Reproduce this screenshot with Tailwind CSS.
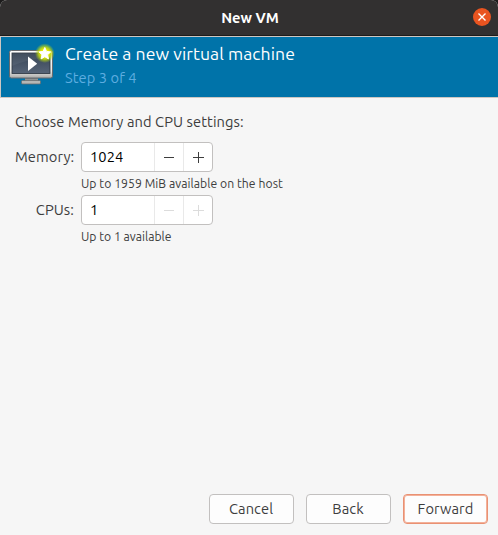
<!DOCTYPE html>
<html lang="en">
<head>
<meta charset="utf-8">
<title>New VM</title>
<script src="https://cdn.jsdelivr.net/npm/@tailwindcss/browser@4"></script>
</head>
<body class="w-[498px] h-[535px] overflow-hidden bg-[#1d1c1c] font-['Ubuntu','Noto_Sans',sans-serif] text-[#3d3d3d]">
<div class="flex h-[535px] flex-col overflow-hidden rounded-t-[7px] bg-[#f6f6f6]">
  <header class="grid h-9 shrink-0 grid-cols-[1fr_auto_1fr] items-center border-b border-[#1d1c1c] bg-[#323030] px-[7px]">
    <h1 class="col-start-2 pl-[2px] text-[14.67px] font-bold leading-[18px] text-white">New VM</h1>
    <button class="justify-self-end" aria-label="Close">
      <svg class="block" width="18" height="19" viewBox="0 0 18 19"><circle cx="9" cy="9" r="9" fill="#e95420"/><path d="M5.5 5.5l7 7M12.5 5.5l-7 7" stroke="#fff" stroke-width="1.4"/></svg>
    </button>
  </header>
  <section class="flex h-[62px] shrink-0 border-y border-l border-[#cdc7c2] bg-[#0073a9] pl-[7px]">
    <svg class="mt-[5px] block shrink-0" width="48" height="48" viewBox="0 0 48 48">
      <defs>
        <linearGradient id="frame" x2="0" y2="1"><stop stop-color="#fff"/><stop offset=".75" stop-color="#e6e6e4"/><stop offset="1" stop-color="#a9a9a7"/></linearGradient>
        <linearGradient id="screen" x2="0" y2="1"><stop stop-color="#354354"/><stop offset="1" stop-color="#576477"/></linearGradient>
        <linearGradient id="stand" x2="0" y2="1"><stop stop-color="#4c5053"/><stop offset="1" stop-color="#b9bbb9"/></linearGradient>
        <radialGradient id="glow"><stop offset=".4" stop-color="#e8ed00"/><stop offset=".62" stop-color="#c7dc0b" stop-opacity=".85"/><stop offset="1" stop-color="#a5d01d" stop-opacity="0"/></radialGradient>
      </defs>
      <path d="M17 35h13v4H17z" fill="url(#stand)"/>
      <rect x="13.5" y="38.5" width="19" height="3.5" rx="1" fill="#b5b7b5" stroke="#686b6c" stroke-width=".8"/>
      <rect x="1.5" y="8.5" width="43" height="27.5" rx="1.8" fill="url(#frame)" stroke="#666b70"/>
      <rect x="4" y="11" width="38" height="20.5" fill="url(#screen)" stroke="#28323d" stroke-width=".8"/>
      <path d="M4 11h38v4Q20 17 4 24z" fill="#fff" opacity=".06"/>
      <path d="M20 14.5v14.5L29.2 21.8z" fill="#fff"/>
      <circle cx="36.8" cy="11.2" r="9.9" fill="url(#glow)"/>
      <path d="M36.8 5.5l1.7 3.9 4.2.5-3.1 2.8.9 4.2-3.7-2.2-3.7 2.2.9-4.2-3.1-2.8 4.2-.5z" fill="#fff" stroke="#fff" stroke-linejoin="round"/>
    </svg>
    <div class="ml-[9px] mt-[5px] whitespace-nowrap">
      <h2 class="text-[17.6px] leading-6 tracking-[0.07px] text-white">Create a new virtual machine</h2>
      <p class="text-[14.67px] leading-6 tracking-[0.08px] text-[#5eade0]">Step 3 of 4</p>
    </div>
  </section>
  <main class="flex-1 px-[15px] pt-[14px] text-[14.67px] tracking-[0.09px]">
    <p class="leading-5">Choose Memory and CPU settings:</p>
    <div class="mt-[10px] grid grid-cols-[60px_auto] gap-x-[6px] whitespace-nowrap">
      <label class="pr-px text-right leading-[30px]">Memory:</label>
      <div class="flex h-[30px] w-[132px] overflow-hidden rounded-[4px] border border-[#c2c0bf] bg-white">
        <span class="flex-1 pl-2 leading-7 text-black">1024</span>
        <button class="flex w-[29px] items-center justify-center border-l border-[#e9e9e9]"><svg width="12" height="12" class="text-[#3d3d3d]"><path d="M1 6.5h10" stroke="currentColor"/></svg></button>
        <button class="flex w-[29px] items-center justify-center border-l border-[#e9e9e9]"><svg width="12" height="12" class="text-[#3d3d3d]"><path d="M1 6.5h11M6.5 1v11" stroke="currentColor"/></svg></button>
      </div>
      <p class="col-start-2 h-[23px] text-[12.2px] leading-[23px] tracking-[0.04px]">Up to 1959 MiB available on the host</p>
      <label class="pr-px text-right leading-[30px]">CPUs:</label>
      <div class="flex h-[30px] w-[132px] overflow-hidden rounded-[4px] border border-[#c2c0bf] bg-white">
        <span class="flex-1 pl-2 leading-7 text-black">1</span>
        <button class="flex w-[29px] items-center justify-center border-l border-[#e9e9e9]"><svg width="12" height="12" class="text-[#dcdcdc]"><path d="M1 6.5h10" stroke="currentColor"/></svg></button>
        <button class="flex w-[29px] items-center justify-center border-l border-[#e9e9e9]"><svg width="12" height="12" class="text-[#dcdcdc]"><path d="M1 6.5h11M6.5 1v11" stroke="currentColor"/></svg></button>
      </div>
      <p class="col-start-2 h-[23px] text-[12.2px] leading-[23px] tracking-[0px]">Up to 1 available</p>
    </div>
  </main>
  <footer class="flex justify-end gap-3 pb-[11px] pr-[10px] text-[14.67px] tracking-[0.09px]">
    <button class="h-[30px] w-[85px] rounded-[4px] border border-[#c2c0bf] bg-[#fdfdfd] pr-px">Cancel</button>
    <button class="h-[30px] w-[85px] rounded-[4px] border border-[#c2c0bf] bg-[#fdfdfd] pr-px">Back</button>
    <button class="h-[30px] w-[85px] rounded-[4px] border border-[#e99173] bg-[#fdfdfd] shadow-[inset_0_0_0_1px_#f3b19a]">Forward</button>
  </footer>
</div>
</body>
</html>
